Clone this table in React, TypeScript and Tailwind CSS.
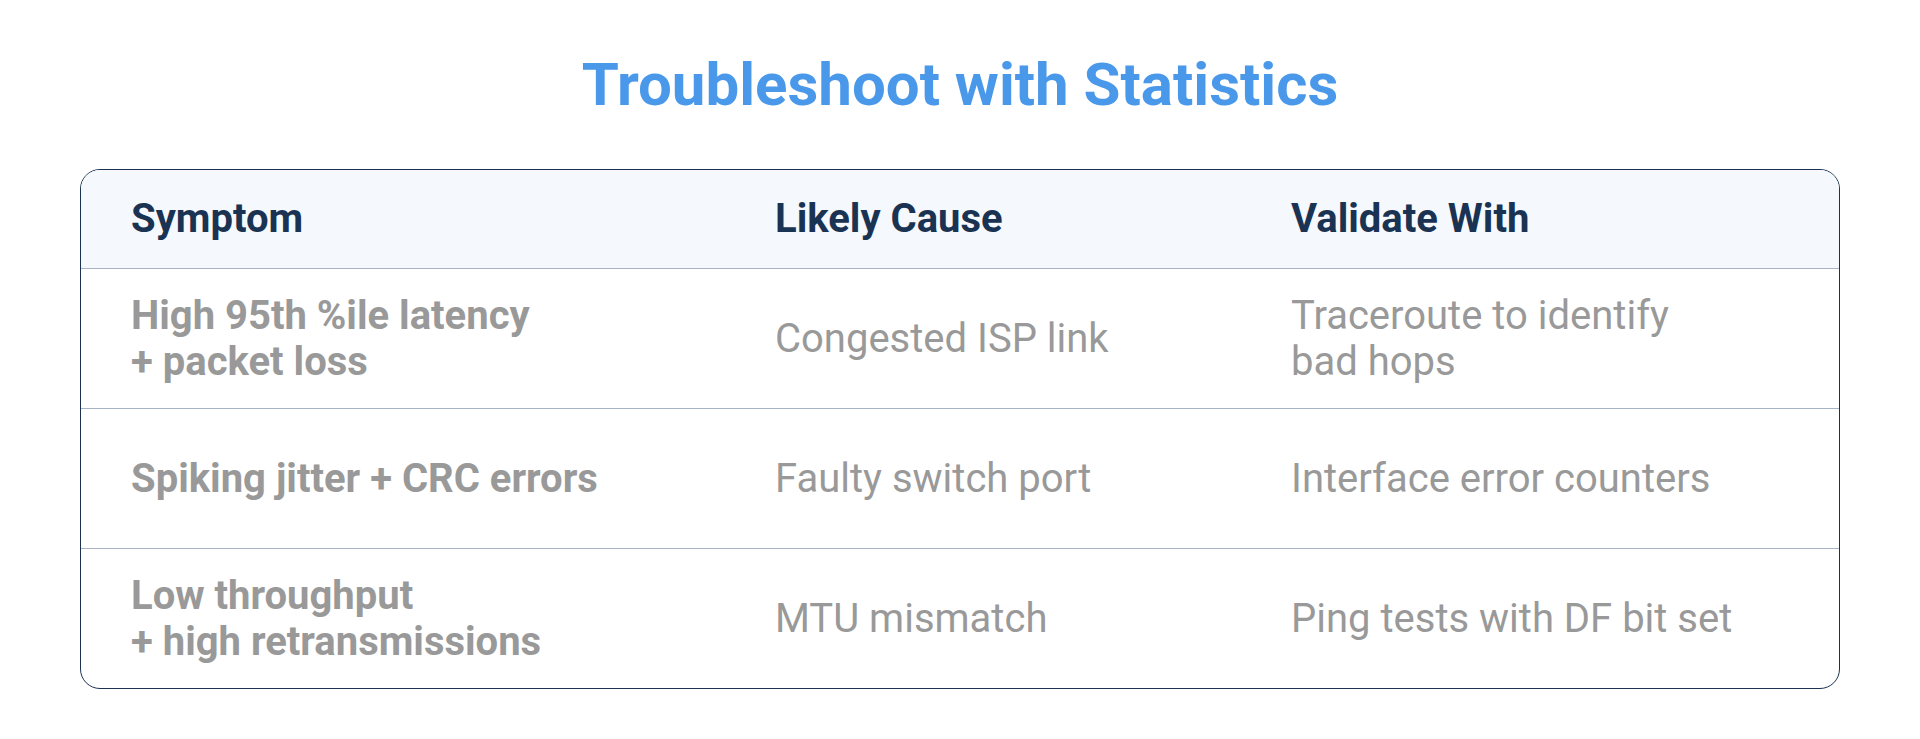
const rows = [
  {
    symptom: ["High 95th %ile latency", "+ packet loss"],
    cause: ["Congested ISP link"],
    validate: ["Traceroute to identify", "bad hops"],
  },
  {
    symptom: ["Spiking jitter + CRC errors"],
    cause: ["Faulty switch port"],
    validate: ["Interface error counters"],
  },
  {
    symptom: ["Low throughput", "+ high retransmissions"],
    cause: ["MTU mismatch"],
    validate: ["Ping tests with DF bit set"],
  },
];

function Lines({ lines }: { lines: string[] }) {
  return (
    <div>
      {lines.map((l) => (
        <div key={l}>{l}</div>
      ))}
    </div>
  );
}

export default function App() {
  return (
    <div
      className="min-h-[739px] w-full bg-white px-20 pt-[50px]"
      style={{ fontFamily: "Roboto, 'Liberation Sans', sans-serif" }}
    >
      <h1 className="text-center text-[60px] font-bold leading-[70px] text-[#4a98e9]">
        Troubleshoot with Statistics
      </h1>

      <div className="mt-[49px] overflow-hidden rounded-[20px] border border-[#1b3352]">
        <div className="grid h-[99px] grid-cols-[644px_516px_1fr] items-center border-b border-[#a6b3c4] bg-[#f5f8fc] text-[40px] font-bold text-[#1b3352]">
          <div className="pl-[50px]">Symptom</div>
          <div className="pl-[50px]">Likely Cause</div>
          <div className="pl-[50px]">Validate With</div>
        </div>

        {rows.map((r, i) => (
          <div
            key={i}
            className={
              "grid grid-cols-[644px_516px_1fr] items-center text-[40px] leading-[46px] text-[#999999] " +
              (i < rows.length - 1 ? "h-[140px] border-b border-[#a6b3c4]" : "h-[139px]")
            }
          >
            <div className="pl-[50px] font-bold">
              <Lines lines={r.symptom} />
            </div>
            <div className="pl-[50px]">
              <Lines lines={r.cause} />
            </div>
            <div className="pl-[50px]">
              <Lines lines={r.validate} />
            </div>
          </div>
        ))}
      </div>
    </div>
  );
}
